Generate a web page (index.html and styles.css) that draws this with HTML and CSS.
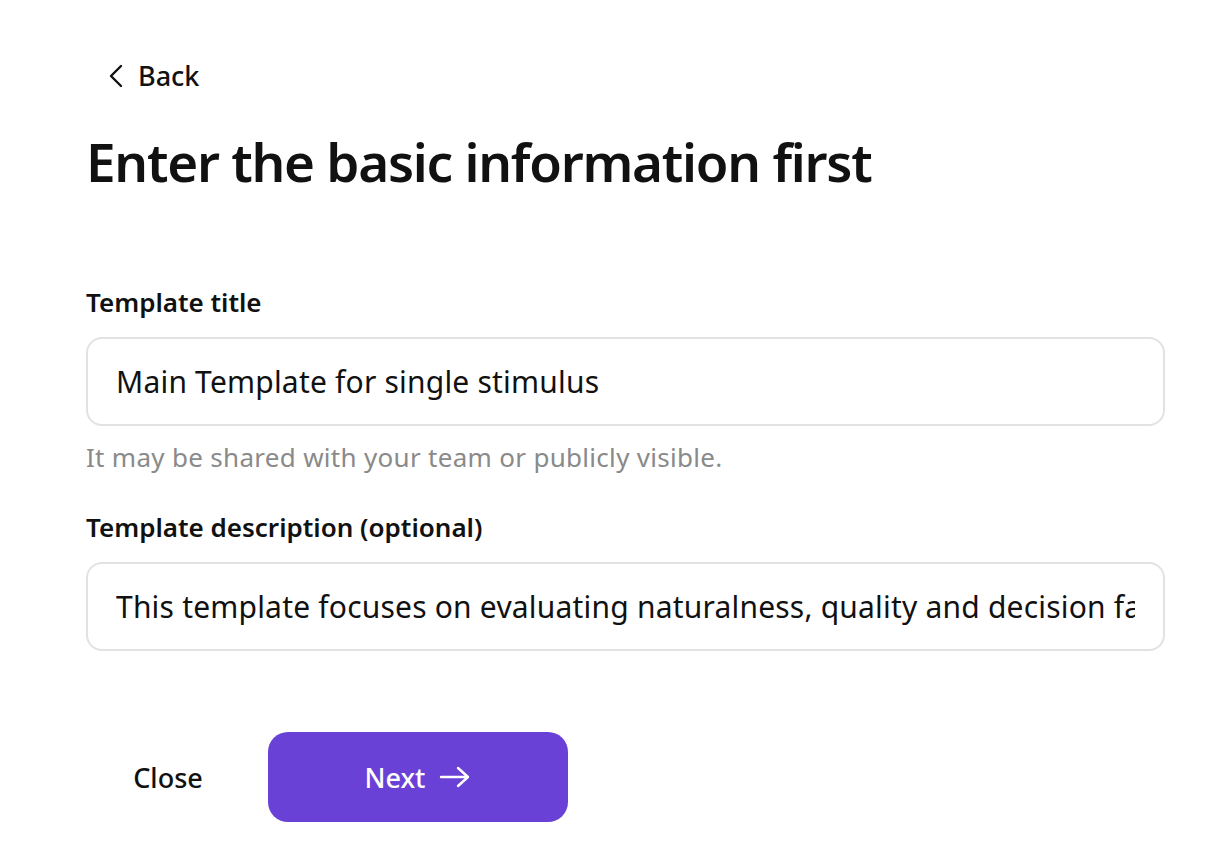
FILE: index.html
```html
<!DOCTYPE html>
<html lang="en">
<head>
<meta charset="utf-8">
<title>Enter the basic information first</title>
<link rel="stylesheet" href="styles.css">
</head>
<body>
<main class="page">
  <a class="back" href="#">
    <svg class="back-icon" viewBox="0 0 16 24" width="16" height="24" aria-hidden="true">
      <path d="M13 2 L3 12 L13 22" fill="none" stroke="#111" stroke-width="2.4" stroke-linecap="round" stroke-linejoin="round"/>
    </svg>
    <span>Back</span>
  </a>
  <h1 class="title">Enter the basic information first</h1>

  <section class="field field-first">
    <label class="label">Template title</label>
    <div class="input"><span class="input-text">Main Template for single stimulus</span></div>
    <p class="hint">It may be shared with your team or publicly visible.</p>
  </section>

  <section class="field">
    <label class="label">Template description (optional)</label>
    <div class="input"><span class="input-text">This template focuses on evaluating naturalness, quality and decision factors for a single stimulus</span></div>
  </section>

  <div class="actions">
    <button class="btn-close" type="button">Close</button>
    <button class="btn-next" type="button">
      <span>Next</span>
      <svg class="arrow" viewBox="0 0 32 24" width="32" height="24" aria-hidden="true">
        <path d="M2 12 H29 M19 3 L29 12 L19 21" fill="none" stroke="#fff" stroke-width="2.4" stroke-linecap="round" stroke-linejoin="round"/>
      </svg>
    </button>
  </div>
</main>
</body>
</html>
```

FILE: styles.css
```css
* { box-sizing: border-box; }
html, body { margin: 0; padding: 0; background: #fff; }
body {
  font-family: "Noto Sans", "Open Sans", "Liberation Sans", sans-serif;
  color: #111;
}
.page {
  display: flex;
  flex-direction: column;
  padding: 54px 45px 0 86px;
}
.back {
  display: flex;
  align-items: center;
  gap: 14px;
  padding-left: 22px;
  color: #111;
  text-decoration: none;
  font-size: 27px;
  font-weight: 500;
  line-height: 44px;
  align-self: flex-start;
}
.back-icon { display: block; }
.title {
  margin: 28px 0 0 0;
  font-size: 53px;
  font-weight: 600;
  line-height: 72px;
  letter-spacing: -1.25px;
}
.field { display: flex; flex-direction: column; }
.field-first { margin-top: 88px; }
.label {
  font-size: 26px;
  font-weight: 600;
  line-height: 32px;
  margin-bottom: 19px;
}
.input {
  height: 89px;
  flex: 0 0 89px;
  border: 2px solid #e2e2e2;
  border-radius: 16px;
  padding: 0 28px;
  display: flex;
  align-items: center;
}
.input-text {
  flex: 1;
  min-width: 0;
  overflow: hidden;
  white-space: nowrap;
  font-size: 30px;
  line-height: 40px;
  color: #111;
  letter-spacing: 0.2px;
}
.hint {
  margin: 14px 0 37px 0;
  font-size: 26px;
  line-height: 34px;
  color: #8a8a8a;
  letter-spacing: 0.3px;
}
.actions {
  display: flex;
  align-items: center;
  margin-top: 81px;
}
.btn-close {
  background: none;
  border: none;
  font-family: inherit;
  font-size: 27px;
  font-weight: 500;
  color: #111;
  width: 164px;
  height: 90px;
  padding: 0;
  margin-right: 18px;
}
.btn-next {
  width: 300px;
  height: 90px;
  border: none;
  border-radius: 20px;
  background: #6a41d6;
  color: #fff;
  font-family: inherit;
  font-size: 27px;
  font-weight: 500;
  display: flex;
  align-items: center;
  justify-content: center;
  gap: 14px;
  padding: 0;
}
.arrow { display: block; }
```
